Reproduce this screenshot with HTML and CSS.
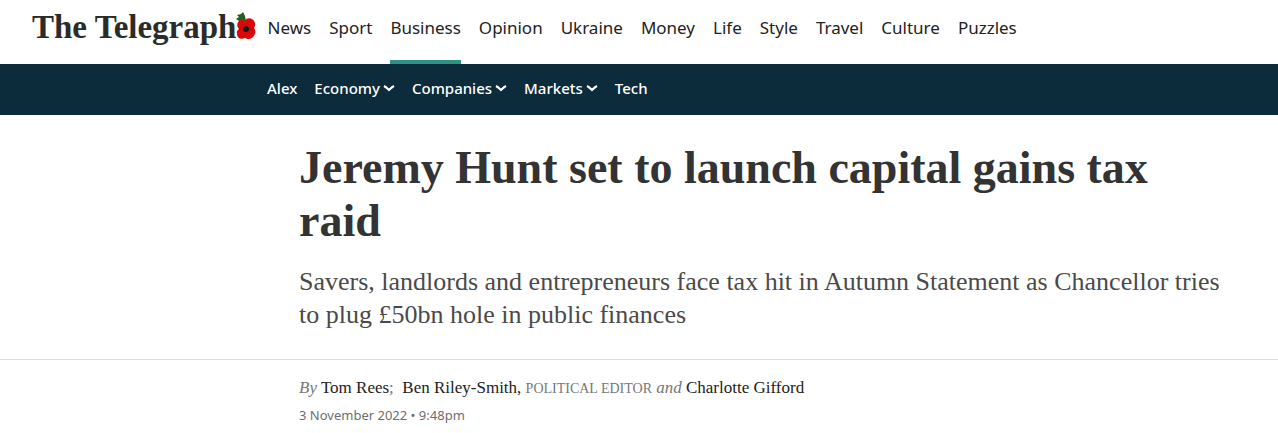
FILE: index.html
```html
<!DOCTYPE html>
<html lang="en">
<head>
<meta charset="utf-8">
<meta name="viewport" content="width=device-width, initial-scale=1">
<title>Jeremy Hunt set to launch capital gains tax raid</title>
<link rel="stylesheet" href="styles.css">
</head>
<body>
<header>
  <div class="masthead">
    <a class="logo" href="#"><span>The Telegraph</span><svg class="poppy" viewBox="0 0 20 30" aria-hidden="true"><path d="M6 12 3 9 0 7 3 5 1 3 5 2 7 0 9 4 10 9Z" fill="#23601f"/><path d="M9 9C11 5 16 6 18 9 20 12 19 14 18 16 20 18 20 22 17 25 14 28 11 27 9 26 5 28 1 26 1 22Q0 19 3 17C0 14 1 9 5 8Q7 8 9 9Z" fill="#dc0808"/><path d="M3 18Q8 14 16 17" fill="none" stroke="#b80606"/><circle cx="10" cy="17" r="3" fill="#191515"/></svg></a>
    <nav class="nav" aria-label="Main">
      <a href="#">News</a>
      <a href="#">Sport</a>
      <a class="current" href="#" aria-current="page">Business</a>
      <a href="#">Opinion</a>
      <a href="#">Ukraine</a>
      <a href="#">Money</a>
      <a href="#">Life</a>
      <a href="#">Style</a>
      <a href="#">Travel</a>
      <a href="#">Culture</a>
      <a href="#">Puzzles</a>
    </nav>
  </div>
  <nav class="subnav" aria-label="Business">
    <a href="#">Alex</a>
    <a href="#">Economy<svg class="chevron" viewBox="0 0 12 8" aria-hidden="true"><path d="M1 2Q3 3 6 6 9 3 11 2"/></svg></a>
    <a href="#">Companies<svg class="chevron" viewBox="0 0 12 8" aria-hidden="true"><path d="M1 2Q3 3 6 6 9 3 11 2"/></svg></a>
    <a href="#">Markets<svg class="chevron" viewBox="0 0 12 8" aria-hidden="true"><path d="M1 2Q3 3 6 6 9 3 11 2"/></svg></a>
    <a href="#">Tech</a>
  </nav>
</header>
<main>
  <div class="intro">
    <h1 class="headline">Jeremy Hunt set to launch capital gains tax raid</h1>
    <p class="standfirst">Savers, landlords and entrepreneurs face tax hit in Autumn Statement as Chancellor tries to plug £50bn hole in public finances</p>
  </div>
  <div class="meta">
    <p class="byline"><i>By</i> <a href="#">Tom Rees</a>;&nbsp; <a href="#">Ben Riley-Smith,</a> <span class="role">POLITICAL EDITOR</span> <i>and</i> <a href="#">Charlotte Gifford</a></p>
    <time class="date" datetime="2022-11-03T21:48">3 November 2022 • 9:48pm</time>
  </div>
</main>
</body>
</html>
```
FILE: styles.css
```css
* {
  box-sizing: border-box;
}

body {
  margin: 0;
  background: #fff;
  color: #333;
  font-family: "Liberation Serif", serif;
}

a {
  color: inherit;
  text-decoration: none;
}

h1,
p {
  margin: 0;
}

.masthead {
  display: flex;
  gap: 11px;
  height: 64px;
  padding-left: 32px;
}

.logo {
  display: flex;
  align-items: center;
  flex: 0 0 224px;
  padding-bottom: 10px;
  color: #2b2b2b;
  font-size: 33px;
  font-weight: bold;
  white-space: nowrap;
}

.poppy {
  flex: none;
  width: 20px;
  height: 30px;
}

.nav {
  display: flex;
  gap: 18px;
  font: 17px/56px "Noto Sans", sans-serif;
  color: #222;
}

.nav a {
  border-bottom: 4px solid transparent;
}

.nav .current {
  border-bottom-color: #2a9384;
}

.subnav {
  display: flex;
  gap: 17px;
  padding-left: 267px;
  padding-bottom: 3px;
  background: #0c2b3b;
  color: #fff;
  font: 500 15px/48px "Noto Sans", sans-serif;
}

.subnav a {
  display: flex;
  align-items: center;
  gap: 3px;
}

.chevron {
  width: 12px;
  height: 8px;
  fill: none;
  stroke: #fff;
  stroke-width: 2;
}

.intro,
.meta {
  padding-left: 299px;
  padding-right: 56px;
}

.intro {
  padding-top: 26px;
  padding-bottom: 28px;
  border-bottom: 1px solid #dcdcdc;
}

.headline {
  font-size: 46px;
  line-height: 53px;
}

.standfirst {
  margin-top: 18px;
  color: #4a4a4a;
  font-size: 26px;
  line-height: 33px;
}

.meta {
  padding-top: 16px;
}

.byline {
  color: #777;
  font-size: 17px;
  line-height: 24px;
}

.byline a {
  color: #222;
}

.role {
  font-size: 14px;
}

.date {
  display: block;
  margin-top: 2px;
  color: #6e6e6e;
  font: 13px/24px "Noto Sans", sans-serif;
}
```
